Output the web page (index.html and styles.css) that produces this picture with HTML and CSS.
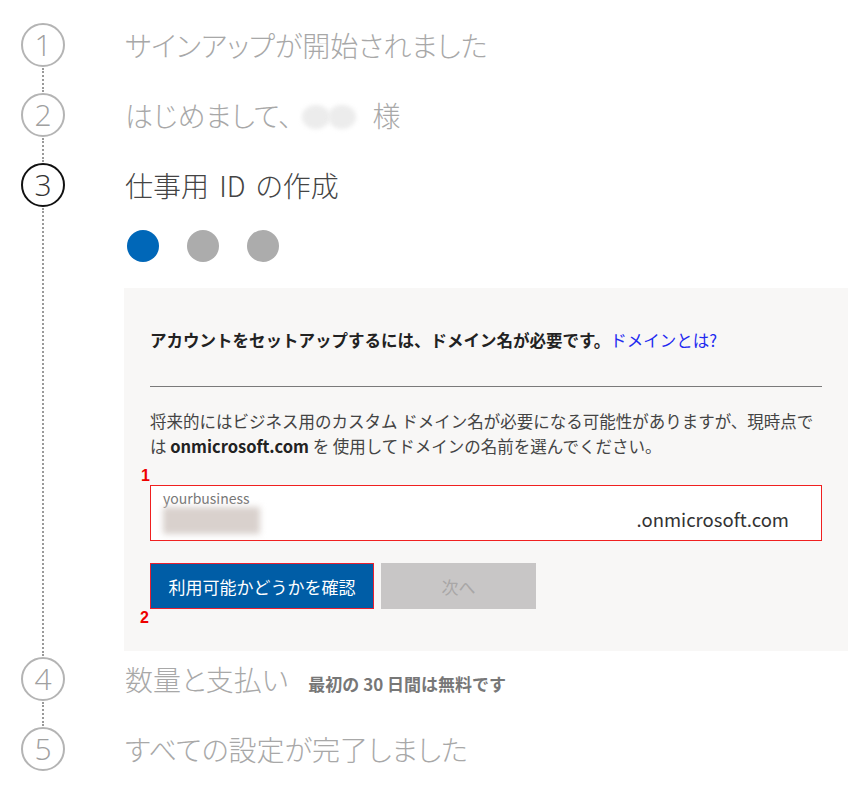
FILE: index.html
```html
<!DOCTYPE html>
<html lang="ja">

<head>
    <meta charset="UTF-8">
    <meta name="viewport" content="width=device-width, initial-scale=1.0">
    <title>サインアップ</title>
    <link rel="stylesheet" href="styles.css">
</head>

<body>
    <ol class="steps">
        <li class="step">
            <div class="marker">
                <span class="circle">1</span>
                <span class="connector"></span>
            </div>
            <div class="step-body">
                <h2 class="step-title">サインアップが開始されました</h2>
            </div>
        </li>

        <li class="step">
            <div class="marker">
                <span class="circle">2</span>
                <span class="connector"></span>
            </div>
            <div class="step-body">
                <h2 class="step-title">はじめまして、<span class="hidden-name"><i></i><i></i></span> 様</h2>
            </div>
        </li>

        <li class="step active">
            <div class="marker">
                <span class="circle">3</span>
                <span class="connector"></span>
            </div>
            <div class="step-body">
                <h2 class="step-title">仕事用 ID の作成</h2>
                <div class="progress">
                    <span class="dot current"></span>
                    <span class="dot"></span>
                    <span class="dot"></span>
                </div>

                <section class="panel">
                    <p class="panel-heading">アカウントをセットアップするには、ドメイン名が必要です。<a href="#">ドメインとは?</a></p>
                    <hr>
                    <p class="panel-text">将来的にはビジネス用のカスタム ドメイン名が必要になる可能性がありますが、現時点では <b>onmicrosoft.com</b> を 使用してドメインの名前を選んでください。</p>

                    <div class="domain-field">
                        <span class="note note-1">1</span>
                        <label for="domain">yourbusiness</label>
                        <div class="domain-row">
                            <span class="domain-value" id="domain"></span>
                            <span class="domain-suffix">.onmicrosoft.com</span>
                        </div>
                    </div>

                    <div class="actions">
                        <span class="note note-2">2</span>
                        <button class="btn btn-primary">利用可能かどうかを確認</button>
                        <button class="btn btn-disabled" disabled>次へ</button>
                    </div>
                </section>
            </div>
        </li>

        <li class="step">
            <div class="marker">
                <span class="circle">4</span>
                <span class="connector"></span>
            </div>
            <div class="step-body">
                <h2 class="step-title">数量と支払い <small>最初の 30 日間は無料です</small></h2>
            </div>
        </li>

        <li class="step last">
            <div class="marker">
                <span class="circle">5</span>
            </div>
            <div class="step-body">
                <h2 class="step-title">すべての設定が完了しました</h2>
            </div>
        </li>
    </ol>
</body>

</html>
```

FILE: styles.css
```css
body {
    margin: 0;
    font-family: "Noto Sans CJK JP", "Noto Sans", sans-serif;
    color: #333;
    background: #fff;
}

.steps {
    list-style: none;
    margin: 0;
    padding: 23px 17px 0 21px;
}

.step {
    display: flex;
    min-height: 70px;
}

.marker {
    display: flex;
    flex-direction: column;
    align-items: center;
    width: 44px;
    margin-right: 60px;
}

.circle {
    box-sizing: border-box;
    width: 44px;
    height: 44px;
    flex: none;
    border: 2px solid #b4b4b4;
    border-radius: 50%;
    display: flex;
    align-items: center;
    justify-content: center;
    font-family: "Open Sans", "Noto Sans", sans-serif;
    font-size: 30px;
    font-weight: 300;
    line-height: 1;
    color: #a0a0a0;
}

.connector {
    flex: 1;
    border-left: 2px dotted #9a9a9a;
    margin: 1px 0;
}

.step-body {
    flex: 1;
}

.step-title {
    margin: 0;
    font-size: 28px;
    font-weight: 300;
    line-height: 44px;
    font-feature-settings: "palt";
    word-spacing: 4px;
    color: #a8a8a8;
}

.step-title small {
    font-size: 17px;
    font-weight: 700;
    font-feature-settings: normal;
    word-spacing: 0;
    color: #777;
    margin-left: 10px;
}

.step.active .circle {
    border-color: #111;
    color: #333;
}

.step.active .step-title {
    color: #444;
}

.hidden-name {
    display: inline-flex;
    vertical-align: middle;
    margin: 0 6px 4px 10px;
}

.hidden-name i {
    width: 28px;
    height: 24px;
    border-radius: 50%;
    background: #ececec;
    filter: blur(2px);
}

.hidden-name i + i {
    margin-left: -2px;
}

.progress {
    display: flex;
    gap: 28px;
    margin: 23px 0 26px 2px;
}

.dot {
    width: 32px;
    height: 32px;
    border-radius: 50%;
    background: #acacac;
}

.dot.current {
    background: #0067b8;
}

.panel {
    background: #f8f7f6;
    margin: 0 0 6px -1px;
    padding: 40px 26px 42px;
}

.panel-heading {
    margin: 0;
    font-size: 16.5px;
    font-weight: 700;
    line-height: 24px;
    color: #222;
}

.panel-heading a {
    color: #1f2bf0;
    font-weight: 400;
    text-decoration: none;
}

hr {
    border: 0;
    border-top: 1px solid #7a7a7a;
    margin: 34px 0 22px;
}

.panel-text {
    margin: 0;
    font-size: 16.5px;
    line-height: 25px;
    color: #444;
}

.panel-text b {
    color: #222;
}

.note {
    position: absolute;
    font-family: "Liberation Sans", Arial, sans-serif;
    font-size: 16px;
    font-weight: 700;
    color: #e00;
    line-height: 1;
}

.domain-field {
    position: relative;
    margin-top: 26px;
    background: #fff;
    border: 1px solid #f02020;
    height: 54px;
    padding: 0 32px 0 12px;
}

.note-1 {
    left: -10px;
    top: -18px;
}

.domain-field label {
    display: block;
    font-size: 14px;
    line-height: 18px;
    padding-top: 3px;
    color: #777;
}

.domain-row {
    display: flex;
    justify-content: space-between;
    align-items: flex-end;
}

.domain-value {
    width: 97px;
    height: 27px;
    background: #d9d1cd;
    filter: blur(3px);
}

.domain-suffix {
    font-size: 18.5px;
    line-height: 22px;
    padding-bottom: 4px;
    color: #333;
}

.actions {
    position: relative;
    display: flex;
    gap: 7px;
    margin-top: 22px;
}

.note-2 {
    left: -10px;
    bottom: -17px;
}

.btn {
    height: 46px;
    border: 1px solid transparent;
    font-family: inherit;
    font-size: 17px;
    cursor: pointer;
}

.btn-primary {
    width: 224px;
    background: #005da6;
    border-color: #e82030;
    color: #fff;
}

.btn-disabled {
    width: 155px;
    background: #c8c6c6;
    color: #a9a7a7;
    cursor: default;
}
```
